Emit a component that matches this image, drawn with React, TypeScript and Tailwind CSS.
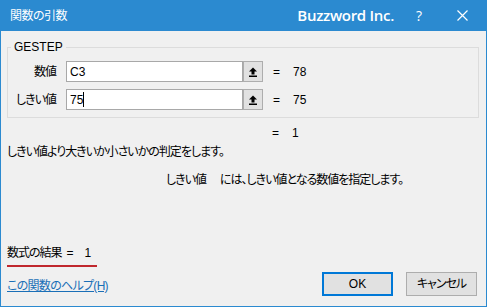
import React from "react";

const font = "font-['Liberation_Sans','Noto_Sans_CJK_JP',sans-serif] [font-feature-settings:'palt']";

function RefButton() {
  return (
    <div className="w-[20px] h-[21px] border border-[#adadad] bg-[#e1e1e1] flex items-center justify-center">
      <svg width="10" height="10" viewBox="0 0 10 10">
        <path d="M5 0.5 L9 4.5 L6.5 4.5 L6.5 7.5 L3.5 7.5 L3.5 4.5 L1 4.5 Z" fill="#000" />
        <rect x="1" y="8.5" width="8" height="1.5" fill="#000" />
      </svg>
    </div>
  );
}

function ArgRow({ label, value, result, caret }: { label: string; value: string; result: string; caret?: boolean }) {
  return (
    <div className="flex items-center h-[21px]">
      <div className="w-[48px] text-right text-[12px] tracking-[-1px] text-black">{label}</div>
      <div className="ml-[10px] w-[177px] h-[21px] border border-[#a8a8a8] bg-white flex items-center pl-[3px] text-[12px] text-black">
        {value}
        {caret && <span className="inline-block w-px h-[15px] bg-black" />}
      </div>
      <RefButton />
      <div className="ml-[10px] w-[20px] text-[12px] text-black">=</div>
      <div className="text-[12px] text-black">{result}</div>
    </div>
  );
}

export default function App() {
  return (
    <div className={`w-[487px] h-[307px] bg-[#f0f0f0] border-x border-b border-[#2b8ad0] flex flex-col ${font}`}>
      <div className="h-[31px] -mx-px bg-[#2b8ad0] flex items-center text-white">
        <div className="ml-[10px] text-[12px] tracking-[-0.5px]">関数の引数</div>
        <div className="ml-auto text-[15px] font-semibold font-['Open_Sans',sans-serif] tracking-[-0.3px]">Buzzword Inc.</div>
        <div className="ml-[22px] text-[14px] font-['Open_Sans',sans-serif]">?</div>
        <svg className="ml-[35px] mr-[19px]" width="11" height="11" viewBox="0 0 11 11">
          <path d="M0.5 0.5 L10.5 10.5 M10.5 0.5 L0.5 10.5" stroke="#fff" strokeWidth="1.2" />
        </svg>
      </div>

      <fieldset className="mt-[9px] ml-[6px] w-[472px] h-[78px] border border-[#dcdcdc] px-0">
        <legend className="ml-[3px] px-[3px] text-[12px] leading-[14px] text-black">GESTEP</legend>
        <div className="flex flex-col gap-[7px] mt-[7px]">
          <ArgRow label="数値" value="C3" result="78" />
          <ArgRow label="しきい値" value="75" result="75" caret />
        </div>
      </fieldset>

      <div className="flex text-[12px] text-black mt-[7px] h-[16px] items-center">
        <div className="ml-[271px] w-[20px]">=</div>
        <div>1</div>
      </div>

      <div className="ml-[6px] mt-[2px] text-[12px] tracking-[-1px] text-black">しきい値より大きいか小さいかの判定をします。</div>
      <div className="ml-[165px] mt-[10px] text-[12px] tracking-[-1px] text-black">
        <span className="mr-[14px]">しきい値</span>には、しきい値となる数値を指定します。
      </div>

      <div className="mt-auto mb-[11px] flex items-end">
        <div className="ml-[6px] flex flex-col">
          <div className="flex text-[12px] text-black">
            <span className="tracking-[-1px]">数式の結果</span>
            <span className="ml-[5px]">=</span>
            <span className="ml-[11px]">1</span>
          </div>
          <div className="mt-[3px] w-[90px] h-[2px] bg-[#c0272d]" />
          <div className="mt-[10px] text-[12px] tracking-[-0.7px] text-[#1a6fb7] underline">この関数のヘルプ(H)</div>
        </div>
        <div className="ml-auto mr-[9px] mb-[-1px] flex gap-[13px]">
          <button className="w-[71px] h-[24px] border-2 border-[#0078d7] bg-[#e1e1e1] text-[12px] text-black">OK</button>
          <button className="w-[71px] h-[24px] border border-[#adadad] bg-[#e1e1e1] text-[12px] tracking-[-1px] text-black">キャンセル</button>
        </div>
      </div>
    </div>
  );
}
